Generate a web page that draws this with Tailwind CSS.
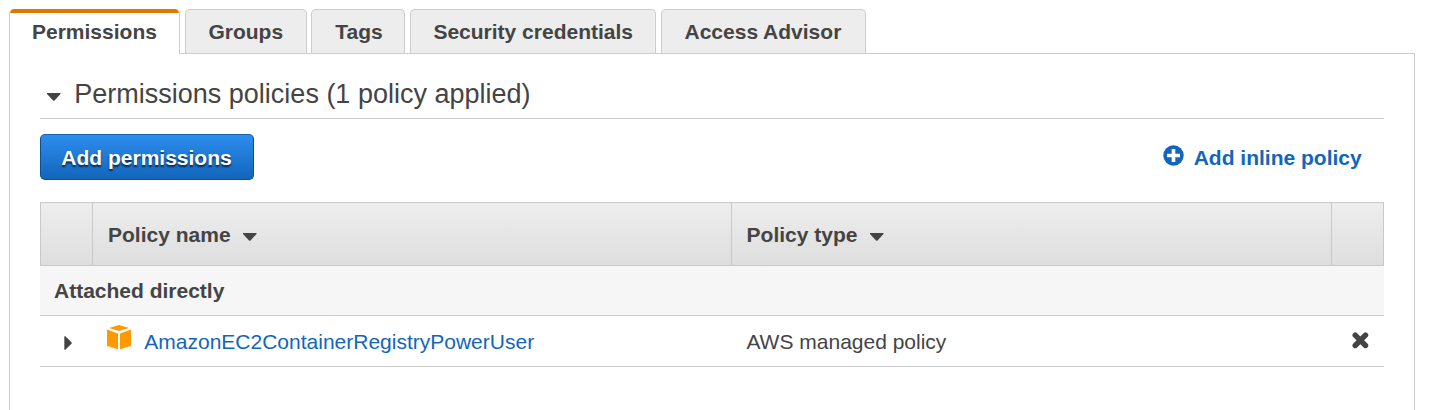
<!DOCTYPE html>
<html lang="en">
<head>
<meta charset="utf-8">
<title>Permissions</title>
<script src="https://cdn.jsdelivr.net/npm/@tailwindcss/browser@4"></script>
</head>
<body class="bg-white h-[410px] overflow-hidden font-['Liberation_Sans',Arial,sans-serif] text-[21px] leading-6 text-[#444]">
<div class="ml-[9px] w-[1406px] h-[410px] pt-[9px] flex flex-col">
  <nav class="flex h-[44px] font-bold shrink-0">
    <a class="relative z-10 w-[171px] h-[45px] mr-[5px] pl-[22px] pt-[11px] bg-white border-x border-[#ccc] rounded-t-[5px] overflow-hidden"><span class="absolute -left-px top-0 w-[171px] h-1 bg-[#e07700]"></span>Permissions</a>
    <a class="w-[122px] mr-1 pl-[22.400px] pt-[10px] bg-[#ededed] border border-b-0 border-[#ccc] rounded-t-[5px]">Groups</a>
    <a class="w-[94px] mr-[5px] pl-[23.200px] pt-[10px] bg-[#ededed] border border-b-0 border-[#ccc] rounded-t-[5px]">Tags</a>
    <a class="w-[246px] mr-[5px] pl-[22.400px] pt-[10px] bg-[#ededed] border border-b-0 border-[#ccc] rounded-t-[5px] whitespace-nowrap">Security credentials</a>
    <a class="w-[205px] pl-[22.500px] pt-[10px] bg-[#ededed] border border-b-0 border-[#ccc] rounded-t-[5px] whitespace-nowrap">Access Advisor</a>
  </nav>
  <main class="grow border border-b-0 border-[#ccc] px-[30px]">
    <h2 class="h-[65px] border-b border-[#ccc] pt-[24px] pl-[7px] flex text-[27px] leading-[32px]">
      <svg class="w-[14px] h-[8px] mt-[15px] mr-[13.300px]" viewBox="0 0 14 8"><path d="M0 0H13.500V1L7.500 7.500Q6.750 8 6 7.500L0 1Z" fill="#444"/></svg>Permissions policies (1 policy applied)
    </h2>
    <div class="flex justify-between mt-[15px] h-[46px] font-bold">
      <button class="w-[214px] h-[46px] rounded-[5px] border border-[#0c508f] border-t-[#1468b4] bg-linear-to-b from-[#2e8def] to-[#1166bb] text-white text-shadow-[0_2px_2px_rgb(0_0_0/0.7)] pt-[2px] pr-px">Add permissions</button>
      <a class="flex pt-3 pr-[22.300px] text-[#1166bb]"><svg class="w-[21px] h-[21px] -mt-px mr-[10px]" viewBox="0 0 21 21"><circle cx="10.5" cy="10.5" r="10.2" fill="#1166bb"/><path d="M10.5 4V17M4 10.5H17" stroke="#fff" stroke-width="3.6"/></svg>Add inline policy</a>
    </div>
    <section class="mt-[22px]">
      <div class="h-[64px] border border-[#c9c9c9] bg-linear-to-b from-[#eee] to-[#dedede] grid grid-cols-[52px_639px_600px_51px] font-bold">
        <div class="border-r border-[#c9c9c9]"></div>
        <div class="border-r border-[#c9c9c9] flex pl-[15px] pt-5">Policy name<svg class="w-[14px] h-[8px] mt-[10px] ml-[12.500px]" viewBox="0 0 14 8"><path d="M0 0H13.500V1L7.500 7.500Q6.750 8 6 7.500L0 1Z" fill="#444"/></svg></div>
        <div class="border-r border-[#c9c9c9] flex pl-[14.600px] pt-5">Policy type<svg class="w-[14px] h-[8px] mt-[10px] ml-[13px]" viewBox="0 0 14 8"><path d="M0 0H13.500V1L7.500 7.500Q6.750 8 6 7.500L0 1Z" fill="#444"/></svg></div>
        <div></div>
      </div>
      <div class="h-[50px] bg-[#f6f6f6] border-b border-[#ccc] pl-[14px] pt-[13px] font-bold">Attached directly</div>
      <div class="h-[51px] border-b border-[#ccc] grid grid-cols-[53px_639px_600px_52px]">
        <div class="pl-6 pt-5"><svg class="w-[8px] h-[14px]" viewBox="0 0 8 14"><path d="M0.300 0.300H1.300L7.500 6.300Q8 7 7.500 7.700L1.300 13.700H0.300Z" fill="#444"/></svg></div>
        <div class="flex pl-[14px] pt-[14px] text-[#1166bb]">
          <svg class="w-6 h-[25px] -mt-[5px] mr-[13.300px]" viewBox="0 0 24 25" fill="#ff9900"><path d="M2 2.900L12 0L22 2.900L12 6ZM0 4.500L11 8.600V24.300L0 21ZM24 4.500L13 8.600V24.300L24 21Z"/></svg>AmazonEC2ContainerRegistryPowerUser</div>
        <div class="pl-[14.400px] pt-[14px]">AWS managed policy</div>
        <div class="pl-5 pt-4"><svg class="w-[17px] h-[17px]" viewBox="0 0 17 17"><path d="M3.200 3.200L13.500 13.500M13.500 3.200L3.200 13.500" stroke="#444" stroke-width="5.4" stroke-linecap="round"/></svg></div>
      </div>
    </section>
  </main>
</div>
</body>
</html>
